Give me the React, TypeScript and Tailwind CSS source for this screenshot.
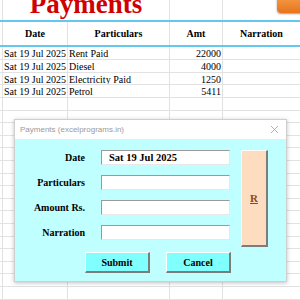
import React from "react";

const rows = [
  { date: "Sat 19 Jul 2025", part: "Rent Paid", amt: "22000" },
  { date: "Sat 19 Jul 2025", part: "Diesel", amt: "4000" },
  { date: "Sat 19 Jul 2025", part: "Electricity Paid", amt: "1250" },
  { date: "Sat 19 Jul 2025", part: "Petrol", amt: "5411" },
];

const serif = { fontFamily: '"Liberation Serif", "Times New Roman", serif' };

const Cell = ({ w, children, className = "" }: { w: string; children?: React.ReactNode; className?: string }) => (
  <div className={`${w} shrink-0 border-r border-[#e2e2e2] overflow-hidden whitespace-nowrap ${className}`}>{children}</div>
);

const Row = ({ children, h, border = "border-b border-[#e2e2e2]" }: { children: React.ReactNode; h: string; border?: string }) => (
  <div className={`flex ${h} ${border}`}>{children}</div>
);

export default function App() {
  const empty = Array.from({ length: 16 });
  return (
    <div className="relative w-[300px] h-[300px] overflow-hidden bg-white text-black" style={serif}>
      {/* sheet */}
      <div className="flex flex-col">
        <Row h="h-[22px]" border="border-b-2 border-[#62c8ef]">
          <Cell w="w-[3px]" />
          <div className="w-[167px] shrink-0 border-r border-[#e2e2e2] relative">
            <div className="absolute inset-x-0 top-[-9px] text-center text-[27px] font-bold leading-none text-[#d10000]">Payments</div>
          </div>
          <Cell w="w-[53px]" />
          <Cell w="w-[77px]" className="border-r-0" />
        </Row>
        <Row h="h-[25px]" border="border-b-2 border-[#62c8ef]">
          <Cell w="w-[3px]" />
          <Cell w="w-[65px]" className="flex items-center justify-center text-[10px] font-bold">Date</Cell>
          <Cell w="w-[102px]" className="flex items-center justify-center text-[10px] font-bold">Particulars</Cell>
          <Cell w="w-[53px]" className="flex items-center justify-center text-[10px] font-bold">Amt</Cell>
          <Cell w="w-[77px]" className="flex items-center justify-center text-[10px] font-bold border-r-0">Narration</Cell>
        </Row>
        {rows.map((r, i) => (
          <Row key={i} h="h-[12.75px]">
            <Cell w="w-[3px]" />
            <Cell w="w-[65px]" className="pl-[1px] text-[10px] leading-[13px]">{r.date}</Cell>
            <Cell w="w-[102px]" className="pl-[1px] text-[10px] leading-[13px]">{r.part}</Cell>
            <Cell w="w-[53px]" className="pr-[1px] text-right text-[10px] leading-[13px]">{r.amt}</Cell>
            <Cell w="w-[77px]" className="border-r-0" />
          </Row>
        ))}
        {empty.map((_, i) => (
          <Row key={i} h="h-[12.6px]">
            <Cell w="w-[3px]" />
            <Cell w="w-[65px]" />
            <Cell w="w-[102px]" />
            <Cell w="w-[53px]" />
            <Cell w="w-[77px]" className="border-r-0" />
          </Row>
        ))}
      </div>

      {/* orange button */}
      <div className="absolute left-[277px] top-[-6px] w-[30px] h-[19px] rounded-[4px] bg-gradient-to-b from-[#f7a04a] to-[#e8741a] shadow-[0_1px_2px_rgba(0,0,0,0.4)]" />

      {/* dialog */}
      <div className="absolute left-[14px] top-[119px] w-[273px] h-[163px] flex flex-col border border-[#cfcfcf] shadow-[0_1px_4px_rgba(0,0,0,0.25)]">
        <div className="h-[19px] bg-white flex items-center justify-between pl-[5px] pr-[6px]">
          <span className="text-[8px] text-[#9a9a9a]" style={{ fontFamily: '"Liberation Sans", Arial, sans-serif' }}>
            Payments (excelprograms.in)
          </span>
          <svg width="9" height="9" viewBox="0 0 9 9" className="mr-[1px]">
            <path d="M1 1L8 8M8 1L1 8" stroke="#a8a8a8" strokeWidth="0.9" />
          </svg>
        </div>
        <div className="flex-1 bg-[#c0ffff] flex flex-col pt-[11px]">
          <div className="flex">
            <div className="flex flex-col gap-[10px]">
              {["Date", "Particulars", "Amount Rs.", "Narration"].map((l, i) => (
                <div key={l} className="flex items-center h-[15px]">
                  <div className="w-[70px] text-right text-[10px] font-bold">{l}</div>
                  <div className="ml-[16px] w-[129px] h-[15px] bg-white border-t border-l border-[#9a9a9a] border-b border-r border-b-[#e8e8e8] border-r-[#e8e8e8] flex items-center pl-[7px] text-[10.5px] font-bold">
                    {i === 0 ? "Sat 19 Jul 2025" : ""}
                  </div>
                </div>
              ))}
            </div>
            <div className="ml-[11px] w-[27px] h-[97px] bg-[#fedcbf] border-r-2 border-b-2 border-[#7c7c7c] border-t border-l border-t-white border-l-white flex items-center justify-center text-[11px] font-bold text-[#8a4a10] underline">
              R
            </div>
          </div>
          <div className="flex mt-[5px] ml-[70px] gap-[16px]">
            {["Submit", "Cancel"].map((b) => (
              <div key={b} className="w-[65px] h-[21px] bg-[#80ffff] border-t border-l border-white border-r-2 border-b-2 border-r-[#7c7c7c] border-b-[#7c7c7c] flex items-center justify-center text-[10px] font-bold">
                {b}
              </div>
            ))}
          </div>
        </div>
      </div>
    </div>
  );
}
